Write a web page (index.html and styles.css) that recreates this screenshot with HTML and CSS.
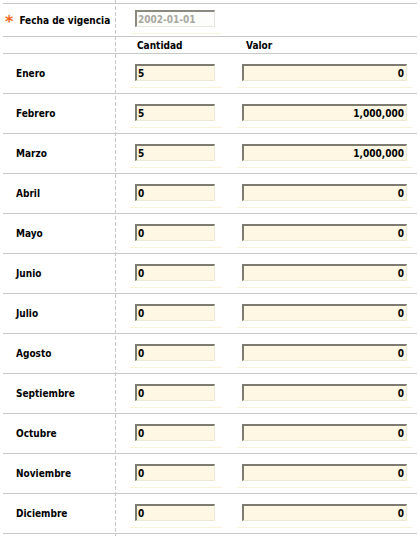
FILE: index.html
```html
<!DOCTYPE html>
<html lang="es">
<head>
<meta charset="utf-8">
<title>Fecha de vigencia</title>
<link rel="stylesheet" href="styles.css">
</head>
<body>
<div class="page">
  <div class="form">
    <div class="row row-date">
      <div class="label"><span class="req">*</span>Fecha de vigencia</div>
      <div class="field qty"><input class="in date" type="text" value="2002-01-01" disabled></div>
    </div>
    <div class="row row-head">
      <div class="label"></div>
      <div class="head qty">Cantidad</div>
      <div class="head val">Valor</div>
    </div>
    <div class="row month">
      <div class="label">Enero</div>
      <div class="field qty"><input class="in" type="text" value="5"></div>
      <div class="field val"><input class="in num" type="text" value="0"></div>
    </div>
    <div class="row month">
      <div class="label">Febrero</div>
      <div class="field qty"><input class="in" type="text" value="5"></div>
      <div class="field val"><input class="in num" type="text" value="1,000,000"></div>
    </div>
    <div class="row month">
      <div class="label">Marzo</div>
      <div class="field qty"><input class="in" type="text" value="5"></div>
      <div class="field val"><input class="in num" type="text" value="1,000,000"></div>
    </div>
    <div class="row month">
      <div class="label">Abril</div>
      <div class="field qty"><input class="in" type="text" value="0"></div>
      <div class="field val"><input class="in num" type="text" value="0"></div>
    </div>
    <div class="row month">
      <div class="label">Mayo</div>
      <div class="field qty"><input class="in" type="text" value="0"></div>
      <div class="field val"><input class="in num" type="text" value="0"></div>
    </div>
    <div class="row month">
      <div class="label">Junio</div>
      <div class="field qty"><input class="in" type="text" value="0"></div>
      <div class="field val"><input class="in num" type="text" value="0"></div>
    </div>
    <div class="row month">
      <div class="label">Julio</div>
      <div class="field qty"><input class="in" type="text" value="0"></div>
      <div class="field val"><input class="in num" type="text" value="0"></div>
    </div>
    <div class="row month">
      <div class="label">Agosto</div>
      <div class="field qty"><input class="in" type="text" value="0"></div>
      <div class="field val"><input class="in num" type="text" value="0"></div>
    </div>
    <div class="row month">
      <div class="label">Septiembre</div>
      <div class="field qty"><input class="in" type="text" value="0"></div>
      <div class="field val"><input class="in num" type="text" value="0"></div>
    </div>
    <div class="row month">
      <div class="label">Octubre</div>
      <div class="field qty"><input class="in" type="text" value="0"></div>
      <div class="field val"><input class="in num" type="text" value="0"></div>
    </div>
    <div class="row month">
      <div class="label">Noviembre</div>
      <div class="field qty"><input class="in" type="text" value="0"></div>
      <div class="field val"><input class="in num" type="text" value="0"></div>
    </div>
    <div class="row month">
      <div class="label">Diciembre</div>
      <div class="field qty"><input class="in" type="text" value="0"></div>
      <div class="field val"><input class="in num" type="text" value="0"></div>
    </div>
  </div>
</div>
</body>
</html>
```
FILE: styles.css
```css
html, body {
  margin: 0;
  padding: 0;
  background: #ffffff;
}

body {
  font-family: "DejaVu Sans Condensed", "DejaVu Sans", sans-serif;
  font-size: 10px;
  font-weight: bold;
  color: #000000;
}

.page {
  padding: 3px 3px 0 3px;
  min-height: 536px;
  box-sizing: border-box;
  background-image: repeating-linear-gradient(to bottom, #c8c8c8 0 4px, transparent 4px 6px);
  background-size: 1px 100%;
  background-position: 115px 0;
  background-repeat: no-repeat;
}

.form {
  width: 414px;
  border-top: 1px solid #c8c8c8;
}

.row {
  display: grid;
  grid-template-columns: 112px 15px 92px 15px 175px;
  border-bottom: 1px solid #c8c8c8;
}

.row .label {
  grid-column: 1;
  display: flex;
  align-items: center;
}

.row .qty { grid-column: 3; }
.row .val { grid-column: 5; }

.row-date { height: 32px; }
.row-date .label { padding-left: 2px; }
.row-head { height: 16px; }
.month { height: 39px; }
.month .label { padding-left: 13px; }

.req {
  color: #f4641c;
  font-family: "DejaVu Sans", sans-serif;
  font-size: 16px;
  font-weight: bold;
  line-height: 10px;
  margin-right: 6px;
  position: relative;
  top: 2px;
}

.head {
  display: flex;
  align-items: center;
  padding-left: 7px;
}
.head.val { padding-left: 9px; }

.field {
  padding: 10px 5px 6px 5px;
  border-bottom: 1px solid #faf3dc;
  align-self: start;
}
.row-date .field { padding-top: 6px; }
.field.qty { padding-right: 7px; }

.in {
  display: block;
  box-sizing: border-box;
  height: 17px;
  margin: 0;
  padding: 0 2px 0 1px;
  font: bold 10px "DejaVu Sans Condensed", "DejaVu Sans", sans-serif;
  color: #000000;
  background: #fdf7e4;
  border-style: solid;
  border-width: 2px 1px 1px 2px;
  border-color: #7d7b70 #ece9d8 #ece9d8 #7d7b70;
  outline: none;
  width: 80px;
}
.val .in { width: 165px; }
.num { text-align: right; }

.in.date {
  background: #fdfdfb;
  color: #a8a8a0;
  border-color: #8c8a80 #e8e6dc #e8e6dc #8c8a80;
  -webkit-text-fill-color: #a8a8a0;
  opacity: 1;
}
```
